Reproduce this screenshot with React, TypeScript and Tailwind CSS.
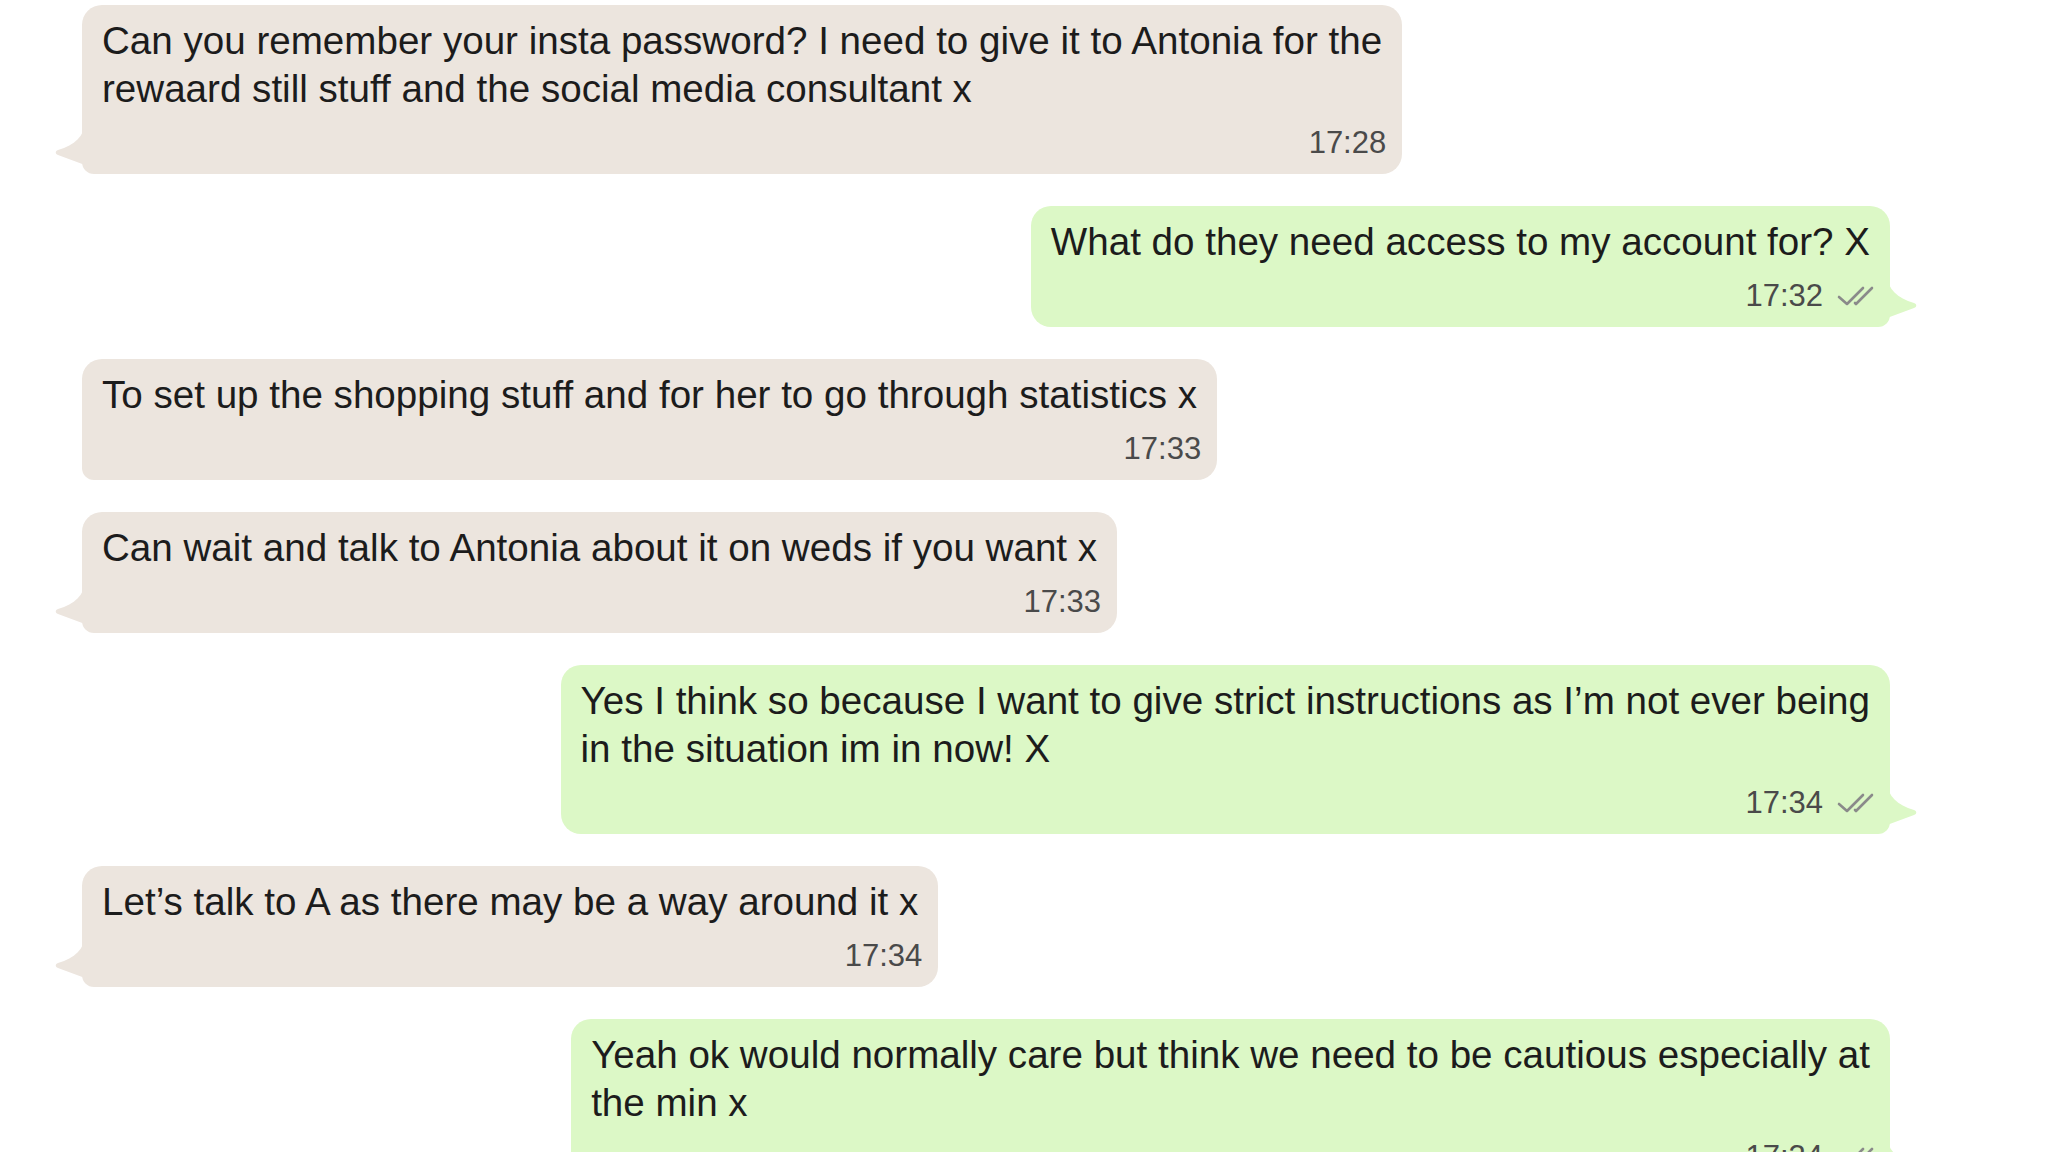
type Msg = {
  out: boolean;
  lines: string[];
  time: string;
  tail?: boolean;
};

const messages: Msg[] = [
  {
    out: false,
    lines: [
      "Can you remember your insta password? I need to give it to Antonia for the",
      "rewaard still stuff and the social media consultant x",
    ],
    time: "17:28",
    tail: true,
  },
  { out: true, lines: ["What do they need access to my account for? X"], time: "17:32", tail: true },
  { out: false, lines: ["To set up the shopping stuff and for her to go through statistics x"], time: "17:33" },
  { out: false, lines: ["Can wait and talk to Antonia about it on weds if you want x"], time: "17:33", tail: true },
  {
    out: true,
    lines: [
      "Yes I think so because I want to give strict instructions as I\u2019m not ever being",
      "in the situation im in now! X",
    ],
    time: "17:34",
    tail: true,
  },
  { out: false, lines: ["Let\u2019s talk to A as there may be a way around it x"], time: "17:34", tail: true },
  {
    out: true,
    lines: [
      "Yeah ok would normally care but think we need to be cautious especially at",
      "the min x",
    ],
    time: "17:34",
    tail: true,
  },
];

// double grey tick next to outgoing timestamps
function Ticks() {
  return (
    <svg width="44" height="24" viewBox="0 0 44 24" className="-mr-[10px] ml-[13px]" fill="none">
      <path d="M3 13 L11 20 L27 4" stroke="#8a8a8a" strokeWidth="2.6" strokeLinecap="round" strokeLinejoin="round" />
      <path d="M19 19 L20 20 L36 4" stroke="#8a8a8a" strokeWidth="2.6" strokeLinecap="round" strokeLinejoin="round" />
    </svg>
  );
}

function TailLeft() {
  return (
    <svg width="30" height="44" viewBox="0 0 30 44" className="absolute -left-[27px] bottom-[7px]">
      <path d="M30 0 C29 13 20 22 3 27 C0 28 0 31 3 32 L30 42 Z" fill="#ece5de" />
    </svg>
  );
}

function TailRight() {
  return (
    <svg width="30" height="44" viewBox="0 0 30 44" className="absolute -right-[27px] bottom-[7px]">
      <path d="M0 0 C1 13 10 22 27 27 C30 28 30 31 27 32 L0 42 Z" fill="#dcf8c6" />
    </svg>
  );
}

function Bubble({ m }: { m: Msg }) {
  return (
    <div className={m.out ? "flex justify-end" : "flex justify-start"}>
      <div
        className={
          "relative w-fit rounded-[20px] pl-5 pr-[20px] pt-3 pb-[15px] " +
          (m.out ? "bg-[#dcf8c6] rounded-br-[12px]" : "bg-[#ece5de] rounded-bl-[12px]")
        }
      >
        {m.tail && (m.out ? <TailRight /> : <TailLeft />)}
        <div className="text-[38.6px] leading-[48px] text-[#1c1c1c] whitespace-nowrap">
          {m.lines.map((l, i) => (
            <div key={i}>{l}</div>
          ))}
        </div>
        <div className="mt-[14px] flex items-center justify-end h-8">
          <span className={"text-[31px] leading-8 text-[#4a4a4a] " + (m.out ? "" : "-mr-1")}>{m.time}</span>
          {m.out && <Ticks />}
        </div>
      </div>
    </div>
  );
}

export default function App() {
  return (
    <div
      className="h-[1152px] w-[2048px] overflow-hidden bg-white"
      style={{ fontFamily: '"Liberation Sans", Arial, sans-serif' }}
    >
      <div className="flex flex-col gap-8 pl-[82px] pr-[158px] pt-[5px]">
        {messages.map((m, i) => (
          <Bubble key={i} m={m} />
        ))}
      </div>
    </div>
  );
}
